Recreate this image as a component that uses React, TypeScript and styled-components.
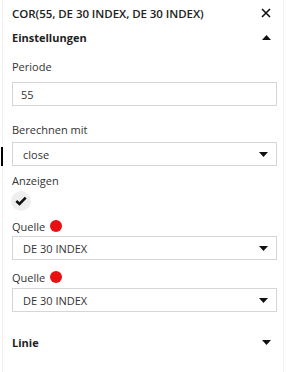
import React from "react";
import styled, { createGlobalStyle } from "styled-components";

const Global = createGlobalStyle`
  html, body { margin: 0; padding: 0; background: #fff; }
  body { font-family: "Open Sans", "Noto Sans", sans-serif; color: #222; }
`;

const Panel = styled.div`
  position: relative;
  width: 282px;
  height: 372px;
  margin-left: 2px;
  box-sizing: border-box;
  border-left: 1px solid #f2f2f2;
  border-right: 1px solid #f2f2f2;
  padding: 0 6px 0 9px;
  display: flex;
  flex-direction: column;
`;

const Header = styled.div`
  display: flex;
  align-items: center;
  justify-content: space-between;
  height: 26px;
`;

const Title = styled.div`
  font-size: 11.5px;
  font-weight: 600;
  color: #222;
  letter-spacing: -0.05px;
`;

const IconBtn = styled.div`
  display: flex;
  align-items: center;
  justify-content: center;
  width: 14px;
  margin-right: 4px;
`;

const SectionHead = styled.div<{ $top?: number }>`
  display: flex;
  align-items: center;
  justify-content: space-between;
  height: 20px;
  margin-top: ${(p) => p.$top ?? 0}px;
`;

const SectionTitle = styled.div`
  font-size: 11px;
  font-weight: 700;
  color: #222;
`;

const Label = styled.div<{ $top: number }>`
  display: flex;
  align-items: center;
  gap: 5px;
  font-size: 11px;
  color: #333;
  margin-top: ${(p) => p.$top}px;
  height: 16px;
`;

const Field = styled.div<{ $top: number }>`
  box-sizing: border-box;
  height: 24px;
  border: 1px solid #d6d6d6;
  margin-top: ${(p) => p.$top}px;
  display: flex;
  align-items: center;
  justify-content: space-between;
  padding: 0 8px 0 8px;
  font-size: 11px;
  color: #333;
  background: #fff;
`;

const SelectText = styled.span`
  padding-left: 2px;
`;

const Dot = styled.span`
  width: 12px;
  height: 12px;
  border-radius: 50%;
  background: #e81010;
  display: inline-block;
`;

const Check = styled.div`
  width: 20px;
  height: 20px;
  border-radius: 50%;
  background: #efefef;
  margin-top: 3px;
  margin-left: -1px;
  display: flex;
  align-items: center;
  justify-content: center;
`;

const Cursor = styled.div`
  position: absolute;
  left: -2px;
  top: 147px;
  width: 2px;
  height: 19px;
  background: #000;
`;

const Caret = ({ up }: { up?: boolean }) => (
  <svg width="9" height="5" viewBox="0 0 9 5">
    {up ? <polygon points="0,5 9,5 4.5,0" fill="#111" /> : <polygon points="0,0 9,0 4.5,5" fill="#111" />}
  </svg>
);

export default function App() {
  return (
    <>
      <Global />
      <Panel>
        <Cursor />
        <Header>
          <Title>COR(55, DE 30 INDEX, DE 30 INDEX)</Title>
          <IconBtn>
            <svg width="10" height="10" viewBox="0 0 10 10">
              <path d="M1 1 L9 9 M9 1 L1 9" stroke="#111" strokeWidth="1.6" />
            </svg>
          </IconBtn>
        </Header>
        <SectionHead $top={1}>
          <SectionTitle>Einstellungen</SectionTitle>
          <IconBtn><Caret up /></IconBtn>
        </SectionHead>
        <Label $top={11}>Periode</Label>
        <Field $top={8}><span>55</span></Field>
        <Label $top={15}>Berechnen mit</Label>
        <Field $top={5}>
          <SelectText>close</SelectText>
          <Caret />
        </Field>
        <Label $top={6}>Anzeigen</Label>
        <Check>
          <svg width="12" height="10" viewBox="0 0 12 10">
            <path d="M1.3 5 L4.5 8 L10.7 1.6" stroke="#111" strokeWidth="2.6" fill="none" />
          </svg>
        </Check>
        <Label $top={7}>Quelle <Dot /></Label>
        <Field $top={2}>
          <SelectText>DE 30 INDEX</SelectText>
          <Caret />
        </Field>
        <Label $top={9}>Quelle <Dot /></Label>
        <Field $top={3}>
          <SelectText>DE 30 INDEX</SelectText>
          <Caret />
        </Field>
        <SectionHead $top={20}>
          <SectionTitle>Linie</SectionTitle>
          <IconBtn><Caret /></IconBtn>
        </SectionHead>
      </Panel>
    </>
  );
}
